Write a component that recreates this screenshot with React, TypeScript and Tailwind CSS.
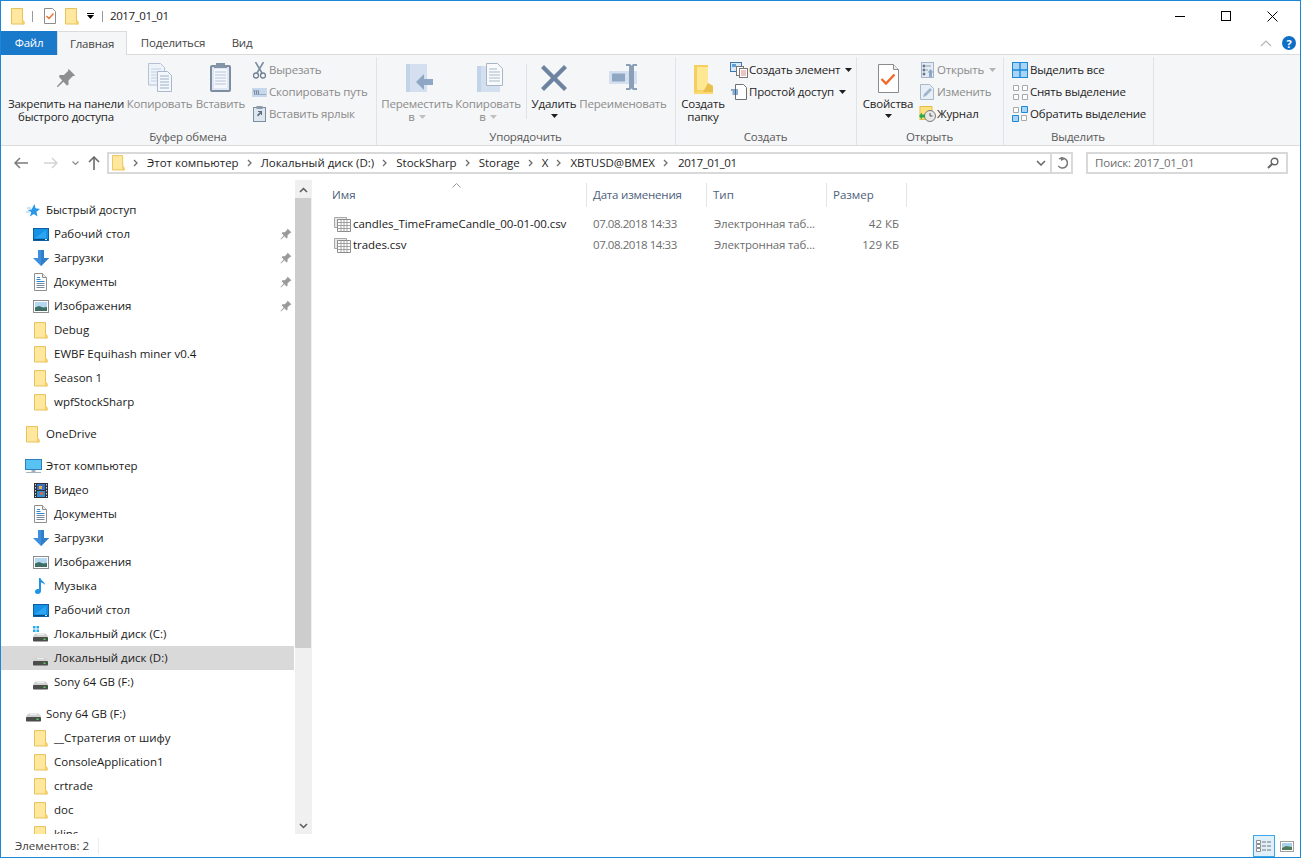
import React from "react";

const Folder = ({ w = 14, h = 17 }: { w?: number; h?: number }) => (
  <svg width={w} height={h} viewBox="0 0 14 17" className="shrink-0">
    <path d="M.5.5h11v13h1.500v2.500H.5z" fill="#ffe79e" stroke="#e8c35c" />
    <path d="M11 16.500v-4l1-1 1.500 2.500v2.500z" fill="#f3cf63" />
  </svg>
);

const Pin = ({ size = 12, color = "#9a9a9a" }: { size?: number; color?: string }) => (
  <svg width={size} height={size} viewBox="0 0 24 24" className="shrink-0">
    <path d="M15 1l8 8-3 1-5 5 0 5-2 1-4-4.500-7 6.500-1-1 6.500-7L3.500 10.500l1-2h5l5-5z" fill={color} />
  </svg>
);

const Doc = () => (
  <svg width="13" height="18" viewBox="0 0 13 18" className="shrink-0">
    <path d="M.5.500h8l4 4v13H.5z" fill="#fff" stroke="#8e8e8e" />
    <path d="M8.500.5v4h4" fill="#eee" stroke="#8e8e8e" />
    <path d="M3 4.500h3M2.500 6.500h4M2.500 8.500h8" stroke="#2f86cf" />
    <path d="M2.500 10.500h8M2.500 12.500h8M2.500 14.500h8" stroke="#7a8a9a" />
  </svg>
);

const Desktop = () => (
  <svg width="16" height="13" viewBox="0 0 16 13" className="shrink-0">
    <rect x=".5" y=".5" width="15" height="12" fill="#1592e6" stroke="#0f5f9e" />
    <path d="M2 10l11-8v8z" fill="#2ea5f2" />
    <path d="M1 11.500h14" stroke="#0b4a7d" />
    <path d="M12 11.500h2" stroke="#cfe8fa" />
  </svg>
);

const Down = () => (
  <svg width="16" height="16" viewBox="0 0 16 16" className="shrink-0">
    <path d="M5 0h6v8h5l-8 8-8-8h5z" fill="#3d8fdc" />
    <path d="M8 0h3v8h5l-8 8z" fill="#2f7fcc" />
  </svg>
);

const Pics = () => (
  <svg width="16" height="13" viewBox="0 0 16 13" className="shrink-0">
    <rect x=".5" y=".5" width="15" height="12" fill="#fff" stroke="#8c8c8c" />
    <rect x="2" y="2" width="12" height="9" fill="#b4d8f0" />
    <path d="M2 7.500l4-1.500 4 1.500 4-.5V11H2z" fill="#3f6f62" />
  </svg>
);

const Video = () => (
  <svg width="14" height="15" viewBox="0 0 14 15" className="shrink-0">
    <rect width="14" height="15" fill="#2f3136" />
    <rect x="3" y="1" width="8" height="6" fill="#3b6fc4" />
    <rect x="3" y="8" width="8" height="6" fill="#2c8fd8" />
    <rect x="5" y="3" width="3" height="3" fill="#e9b43c" />
    <rect x="6" y="9" width="3" height="3" fill="#d9663c" />
    <path d="M1.500 1v13M12.500 1v13" stroke="#d8d8d8" strokeDasharray="1.500 1.500" />
  </svg>
);

const Music = () => (
  <svg width="11" height="16" viewBox="0 0 11 16" className="shrink-0">
    <path d="M4 0h1.500c.3 2.500 4.500 3.500 4.500 7-1-1.500-2.500-2.500-4-2.500V13c0 2-1.500 3-3.300 3C1 16 0 15 0 13.700 0 12 1.500 11 3 11c.4 0 .8 0 1 .2z" fill="#1d94e6" />
  </svg>
);

const Drive = ({ win }: { win?: boolean }) => (
  <svg width="15" height="16" viewBox="0 0 15 16" className="shrink-0">
    {win && <path d="M0 0h2.500v2.500H0zM3.500 0H6v2.500H3.500zM0 3.500h2.500V6H0zM3.500 3.500H6V6H3.500z" fill="#27a9f0" />}
    <path d="M2.500 7.500h10Q15 9 15 11.500H0Q0 9 2.500 7.500z" fill="#d2d2d2" />
    <path d="M4 8.500h7" stroke="#efefef" />
    <rect x="0" y="11" width="15" height="4.500" rx=".8" fill="#4c4c4c" />
    <rect x="10.500" y="12.500" width="2" height="1.500" fill="#3fe04a" />
  </svg>
);

const Computer = () => (
  <svg width="17" height="15" viewBox="0 0 17 15" className="shrink-0">
    <rect x=".5" y=".5" width="16" height="10" fill="#59c2f5" stroke="#2f7fb8" />
    <path d="M6.500 11h4v2h-4z" fill="#9fb0bc" />
    <path d="M1 13.500h15" stroke="#a7b4be" />
  </svg>
);

const StarIcon = () => (
  <svg width="14" height="13" viewBox="0 0 14 13" className="shrink-0">
    <path d="M8.500 0l1 4.300L14 5l-3.500 2.800 1 4.700-3.700-2.500L4 12.500l1.200-4.500L1.500 6l4-.5z" fill="#2a97e8" />
    <path d="M1 4h4M0 8h3.500" stroke="#8bcaf5" />
  </svg>
);

const TableIcon = () => (
  <svg width="17" height="16" viewBox="0 0 17 16" className="shrink-0">
    <path d="M.5 1.500h12v2h-9v8h-3z" fill="#e8e8e8" stroke="#a8a8a8" />
    <path d="M3.500 3.500h13v12h-13z" fill="#fff" stroke="#8c8c8c" />
    <path d="M3.500 6.500h13M3.500 9.500h13M3.500 12.500h13M7 4v11M10 4v11M13 4v11" stroke="#9a9a9a" strokeWidth=".9" />
  </svg>
);

const ChevR = () => (
  <svg width="5" height="8" viewBox="0 0 5 8" className="shrink-0">
    <path d="M1 1l3 3-3 3" fill="none" stroke="#6d6d6d" strokeWidth="1.300" />
  </svg>
);

const Caret = ({ color = "#1e1e1e" }: { color?: string }) => (
  <svg width="7" height="4" viewBox="0 0 7 4" className="shrink-0">
    <path d="M0 0h7L3.500 4z" fill={color} />
  </svg>
);

const Scissors = () => (
  <svg width="13" height="17" viewBox="0 0 13 17" className="shrink-0">
    <path d="M2.500 0l6.500 11M10.500 0L4 11" stroke="#7c8ea3" strokeWidth="1.600" fill="none" />
    <circle cx="3" cy="13.500" r="2.500" fill="none" stroke="#6f7f92" strokeWidth="1.300" />
    <circle cx="10" cy="13.500" r="2.500" fill="none" stroke="#6f7f92" strokeWidth="1.300" />
  </svg>
);

const CopyPathIcon = () => (
  <svg width="15" height="9" viewBox="0 0 15 9" className="shrink-0">
    <rect width="15" height="9" fill="#c8d8ec" />
    <path d="M2 2l1 5M4 2l1 5M6 2l1 5M8.500 6.500h1M10.500 6.500h1M12.500 6.500h1" stroke="#6b7f96" />
  </svg>
);

const PasteLinkIcon = () => (
  <svg width="13" height="16" viewBox="0 0 13 16" className="shrink-0">
    <rect x=".5" y="1.500" width="12" height="14" fill="#dfe6f0" stroke="#7c8ea3" />
    <rect x="3.500" y="0" width="6" height="3" fill="#8c9aaa" />
    <path d="M4 9l3-3H5V5h4v4H8V7.500L5 10.500z" fill="#5f6f80" />
  </svg>
);

const LargePin = () => (
  <svg width="20" height="20" viewBox="0 0 24 24" className="mt-[5px] shrink-0">
    <path d="M15 1l8 8-3 1-5 5 0 5-2 1-4-4.500-7 6.500-1-1 6.500-7L3.500 10.500l1-2h5l5-5z" fill="#8d8f91" />
  </svg>
);

const LargeCopy = () => (
  <svg width="24" height="29" viewBox="0 0 24 29" className="shrink-0">
    <path d="M.5.500h12l4 4V22H.5z" fill="#eef3f9" stroke="#b4c2d4" />
    <path d="M3 6h10M3 9h10M3 12h10M3 15h10M3 18h10" stroke="#c3cfdf" />
    <path d="M9.500 8.500h10l4 4V28.500h-14z" fill="#f4f7fb" stroke="#a9b9cd" />
    <path d="M12 13h9M12 16h9M12 19h9M12 22h9M12 25h9" stroke="#9fb1c8" />
  </svg>
);

const LargePaste = () => (
  <svg width="21" height="29" viewBox="0 0 21 29" className="shrink-0">
    <rect x="1" y="3" width="19" height="25" rx="1" fill="#dfe7f2" stroke="#7d8ea3" strokeWidth="2" />
    <rect x="4" y="6" width="13" height="19" fill="#f4f7fb" />
    <path d="M5 9h11M5 12h11M5 15h11M5 18h11M5 21h11" stroke="#b6c5d8" />
    <path d="M6 0h9v2h2v3H4V2h2z" fill="#8493a5" />
  </svg>
);

const MoveIcon = () => (
  <svg width="27" height="29" viewBox="0 0 27 29" className="ml-[5px] mt-[1px] shrink-0">
    <rect x="0" y="0" width="21" height="28" fill="#d4e0f0" />
    <path d="M0 0h4v28H0z" fill="#c3d3e8" />
    <path d="M10 18L18 10v5h9v6h-9v5z" fill="#8ea7c4" />
  </svg>
);

const CopyToIcon = () => (
  <svg width="26" height="29" viewBox="0 0 26 29" className="ml-[4px] shrink-0">
    <rect x="0" y="3" width="23" height="26" fill="#d4e0f0" />
    <path d="M0 3h4v26H0z" fill="#c3d3e8" />
    <path d="M9.500.5h11l5 5v17h-16z" fill="#f8fafc" stroke="#a7b5c6" />
    <path d="M12 6h8M12 9h11M12 12h11M12 15h11M12 18h11" stroke="#a9b8ca" />
  </svg>
);

const DeleteIcon = () => (
  <svg width="26" height="26" viewBox="0 0 26 26" className="mt-[2px] shrink-0">
    <path d="M3 0l10 10L23 0l3 3-10 10 10 10-3 3-10-10L3 26l-3-3 10-10L0 3z" fill="#6e83a0" />
  </svg>
);

const RenameIcon = () => (
  <svg width="29" height="26" viewBox="0 0 29 26" className="mt-[1px] shrink-0">
    <rect x="0" y="7" width="28" height="13" fill="#d4e0f0" />
    <rect x="3" y="9.500" width="13" height="8" fill="#90a7c4" />
    <path d="M17 0h4l1.500 1.500L24 0h4v2h-3v22h3v2h-4l-1.500-1.500L21 26h-4v-2h3V2h-3z" fill="#8b9fb9" />
  </svg>
);

const NewFolderIcon = () => (
  <svg width="19" height="29" viewBox="0 0 19 29" className="mt-[2px] shrink-0">
    <path d="M0 0h14v18l5 3v8H0z" fill="#fbd870" />
    <path d="M0 0h14v25l-14 2z" fill="#f5d060" />
    <path d="M3 2h11v23H3z" fill="#ffe793" />
    <path d="M14 18l5 3v6H9z" fill="#e9c04e" />
  </svg>
);

const NewItemIcon = () => (
  <svg width="18" height="16" viewBox="0 0 18 16" className="shrink-0">
    <rect x=".5" y=".5" width="11" height="9" fill="#d9e8f6" stroke="#3a78b0" />
    <rect x="2" y="2" width="4" height="3" fill="#5f9ed0" />
    <rect x="6.500" y="4.500" width="7" height="9" fill="#fff" stroke="#777" />
    <rect x="9.500" y="6.500" width="8" height="9" fill="#fff" stroke="#777" />
    <path d="M11 9h5M11 11h5M11 13h5" stroke="#d98a86" />
  </svg>
);

const EasyAccessIcon = () => (
  <svg width="16" height="16" viewBox="0 0 16 16" className="shrink-0">
    <path d="M4.500.5h8l3 3v12h-11z" fill="#fff" stroke="#707070" />
    <path d="M0 6h7M1.500 8h5.500M1.500 10h5.500" stroke="#1f5f9e" />
  </svg>
);

const PropsIcon = () => (
  <svg width="21" height="29" viewBox="0 0 21 29" className="mt-[1px] shrink-0">
    <path d="M.5.500h15l5 5v23H.5z" fill="#fff" stroke="#8c8c8c" />
    <path d="M15.500.5v5h5" fill="#ececec" stroke="#8c8c8c" />
    <path d="M3.500 15l4.500 4.500 8.500-9" fill="none" stroke="#ef6a2a" strokeWidth="2.400" />
  </svg>
);

const OpenIcon = () => (
  <svg width="13" height="16" viewBox="0 0 13 16" className="shrink-0">
    <rect x=".5" y=".5" width="12" height="15" fill="#e4ebf4" stroke="#a5b5c8" />
    <path d="M2 3h2v2H2zM2 7h2v2H2zM2 11h2v2H2zM5 4h5M5 8h2" stroke="#8ea0b6" />
    <path d="M9.500 7l3 3.500H11V15H8v-4.500H6.500z" fill="#8ea7c4" />
  </svg>
);

const EditIcon = () => (
  <svg width="14" height="16" viewBox="0 0 14 16" className="shrink-0">
    <path d="M.5.5h9l4 4v11H.5z" fill="#e8eef6" stroke="#a9b9cc" />
    <path d="M3 13l1-3 6-6 2 2-6 6z" fill="#9fb4cd" />
  </svg>
);

const HistoryIcon = () => (
  <svg width="17" height="16" viewBox="0 0 17 16" className="shrink-0">
    <rect x="1" y=".5" width="12" height="13" fill="#ffe27f" stroke="#e3bd4b" />
    <circle cx="11" cy="10" r="5.500" fill="#e8e8e8" stroke="#7a7a7a" />
    <path d="M11 7v3h2.500" stroke="#555" fill="none" />
    <path d="M0 10l3-3.500v2h3v3H3v2z" fill="#2ea84a" />
  </svg>
);

const SelectAllIcon = () => (
  <svg width="16" height="16" viewBox="0 0 16 16" className="shrink-0">
    <rect x=".5" y=".5" width="15" height="15" fill="#a9d4f5" stroke="#1a8ad9" />
    <path d="M8 0v16M0 8h16" stroke="#1a8ad9" strokeWidth="1.400" />
  </svg>
);

const SelectNoneIcon = () => (
  <svg width="15" height="15" viewBox="0 0 15 15" className="shrink-0">
    <path d="M.5.5h5v5h-5zM9.500.5h5v5h-5zM.5 9.500h5v5h-5zM9.500 9.500h5v5h-5z" fill="#fff" stroke="#a8a8a8" />
  </svg>
);

const InvertIcon = () => (
  <svg width="16" height="16" viewBox="0 0 16 16" className="shrink-0">
    <path d="M9.500.5h6v6h-6zM.5 9.500h6v6h-6z" fill="#a9d4f5" stroke="#1a8ad9" />
    <path d="M1.500 1.500h5v5h-5zM9.500 9.500h5v5h-5z" fill="#fff" stroke="#a8a8a8" />
  </svg>
);

const SmallBtn = ({ icon, text, off, caret, w = 19 }: { icon: React.ReactNode; text: string; off?: boolean; caret?: boolean; w?: number }) => (
  <div className={`flex h-[22px] items-center whitespace-nowrap ${off ? "text-[#8b8b8b]" : "text-[#1e1e1e]"}`}>
    <div className="flex items-center justify-center" style={{ width: w }}>{icon}</div>
    <span>{text}</span>
    {caret && <span className="ml-[5px] flex"><Caret color={off ? "#b5b5b5" : "#1e1e1e"} /></span>}
  </div>
);

const LargeBtn = ({ icon, lines, off, w, caret }: { icon: React.ReactNode; lines: string[]; off?: boolean; w: number; caret?: "off" | "on" }) => (
  <div className={`flex flex-col items-center text-center leading-[13px] whitespace-nowrap ${off ? "text-[#8b8b8b]" : "text-[#1e1e1e]"}`} style={{ width: w }}>
    <div className="flex h-[40px] w-full justify-center pt-[6px]">{icon}</div>
    {lines.map((l) => (
      <div key={l} className="flex items-center gap-[4px]">
        {l}
        {caret === "off" && l === lines[lines.length - 1] && lines.length > 1 && <Caret color="#c0c0c0" />}
      </div>
    ))}
    {caret === "on" && <div className="mt-[4px] flex h-[9px] justify-center"><Caret /></div>}
  </div>
);

const Group = ({ w, label, children }: { w: number; label: string; children: React.ReactNode }) => (
  <div className="flex shrink-0 flex-col" style={{ width: w }}>
    <div className="flex h-[73px] border-r border-[#e1e3e6]">{children}</div>
    <div className="flex h-[16px] items-center justify-center border-r border-[#e1e3e6] pb-[1px] pr-[1px] text-[#5a5a5a]">{label}</div>
  </div>
);

const Row = ({ icon, text, pin, sel, indent = 31, iconW = 17 }: { icon: React.ReactNode; text: string; pin?: boolean; sel?: boolean; indent?: number; iconW?: number }) => (
  <div className={`flex h-6 shrink-0 items-center whitespace-nowrap text-[#1a1a1a] ${sel ? "mr-px bg-[#d9d9d9]" : ""}`}>
    <div className="flex shrink-0 items-center justify-center" style={{ marginLeft: indent, width: iconW }}>{icon}</div>
    <span className="ml-[5px] flex-1">{text}</span>
    {pin && <span className="mr-[3px] flex"><Pin /></span>}
  </div>
);

const Head = ({ icon, text }: { icon: React.ReactNode; text: string }) => (
  <Row icon={icon} text={text} indent={24} iconW={16} />
);

const crumbs = ["Этот компьютер", "Локальный диск (D:)", "StockSharp", "Storage", "X", "XBTUSD@BMEX", "2017_01_01"];

const files = [
  { n: "candles_TimeFrameCandle_00-01-00.csv", s: "42 КБ" },
  { n: "trades.csv", s: "129 КБ" },
];

export default function App() {
  return (
    <div
      className="flex h-[858px] w-[1301px] flex-col overflow-hidden border border-[#1a88d6] bg-white text-[11.5px] text-[#1a1a1a]"
      style={{ fontFamily: '"Open Sans","Noto Sans",sans-serif' }}
    >
      {/* title bar */}
      <div className="flex h-[30px] shrink-0 items-center pl-[10px]">
        <Folder />
        <div className="ml-[7px] h-[11px] w-px bg-[#9a9a9a]" />
        <div className="ml-[11px] flex"><svg width="12" height="16" viewBox="0 0 12 16"><path d="M.5.5h8l3 3v12H.5z" fill="#fff" stroke="#8c8c8c" /><path d="M2.500 8l2.500 2.500 4.500-5" fill="none" stroke="#ef6a2a" strokeWidth="1.300" /></svg></div>
        <div className="ml-[9px]"><Folder /></div>
        <div className="ml-[8px] flex w-[7px] flex-col items-center gap-[1px]">
          <div className="h-px w-[7px] bg-black" />
          <Caret color="#000" />
        </div>
        <div className="ml-[8px] h-[11px] w-px bg-[#9a9a9a]" />
        <span className="ml-[7px] tracking-[-0.4px] text-[#1a1a1a]">2017_01_01</span>
        <div className="flex-1" />
        <div className="flex h-full items-center">
          <div className="flex w-[46px] justify-center"><div className="h-px w-[10px] bg-black" /></div>
          <div className="flex w-[46px] justify-center"><div className="h-[10px] w-[10px] border border-black" /></div>
          <div className="flex w-[46px] justify-center">
            <svg width="11" height="11" viewBox="0 0 11 11"><path d="M.5.5l10 10M10.500.5l-10 10" stroke="#000" strokeWidth="1" /></svg>
          </div>
          <div className="w-[5px]" />
        </div>
      </div>

      {/* tabs */}
      <div className="relative z-10 -mb-px flex h-[24px] shrink-0 items-stretch tracking-[-0.2px]">
        <div className="flex w-[56px] items-center justify-center bg-[#1979ca] text-white">Файл</div>
        <div className="flex w-[70px] items-center justify-center border-x border-t border-[#dadbdc] bg-[#f5f6f7] text-[#444]">Главная</div>
        <div className="flex w-[92px] items-center justify-center text-[#444]">Поделиться</div>
        <div className="flex w-[46px] items-center justify-center text-[#444]">Вид</div>
        <div className="flex-1" />
        <div className="flex items-center">
          <svg width="12" height="7" viewBox="0 0 12 7"><path d="M1 6l5-5 5 5" fill="none" stroke="#b5b5b5" strokeWidth="1.200" /></svg>
          <div className="mx-[4px] ml-[10px] flex h-[14px] w-[14px] items-center justify-center rounded-full bg-[#0f6fc6] text-[11px] font-bold leading-none text-white">?</div>
        </div>
      </div>

      {/* ribbon */}
      <div className="flex h-[92px] shrink-0 border-y border-[#dadbdc] bg-[#f5f6f7] pt-[2px] tracking-[-0.2px]">
        <Group w={376} label="Буфер обмена">
          <div className="flex pl-[6px]">
            <LargeBtn w={118} icon={<LargePin />} lines={["Закрепить на панели", "быстрого доступа"]} />
            <LargeBtn w={69} off icon={<LargeCopy />} lines={["Копировать"]} />
            <LargeBtn w={53} off icon={<LargePaste />} lines={["Вставить"]} />
            <div className="ml-[3px] flex flex-col pt-[2px]">
              <SmallBtn off icon={<Scissors />} text="Вырезать" />
              <SmallBtn off icon={<CopyPathIcon />} text="Скопировать путь" />
              <SmallBtn off icon={<PasteLinkIcon />} text="Вставить ярлык" />
            </div>
          </div>
        </Group>
        <Group w={299} label="Упорядочить">
          <div className="flex pl-[5px]">
            <LargeBtn w={70} off caret="off" icon={<MoveIcon />} lines={["Переместить", "в"]} />
            <LargeBtn w={72} off caret="off" icon={<CopyToIcon />} lines={["Копировать", "в"]} />
            <div className="mx-[2px] mt-[7px] h-[55px] w-px bg-[#dfe1e4]" />
            <LargeBtn w={50} caret="on" icon={<DeleteIcon />} lines={["Удалить"]} />
            <LargeBtn w={88} off icon={<RenameIcon />} lines={["Переименовать"]} />
          </div>
        </Group>
        <Group w={181} label="Создать">
          <div className="flex pl-[5px]">
            <LargeBtn w={44} icon={<NewFolderIcon />} lines={["Создать", "папку"]} />
            <div className="ml-[4px] flex flex-col pt-[2px]">
              <SmallBtn w={20} icon={<NewItemIcon />} text="Создать элемент" caret />
              <SmallBtn w={20} icon={<EasyAccessIcon />} text="Простой доступ" caret />
            </div>
          </div>
        </Group>
        <Group w={147} label="Открыть">
          <div className="flex pl-[4px]">
            <LargeBtn w={54} caret="on" icon={<PropsIcon />} lines={["Свойства"]} />
            <div className="ml-[2px] flex flex-col pt-[2px]">
              <SmallBtn off w={20} icon={<OpenIcon />} text="Открыть" caret />
              <SmallBtn off w={20} icon={<EditIcon />} text="Изменить" />
              <SmallBtn w={20} icon={<HistoryIcon />} text="Журнал" />
            </div>
          </div>
        </Group>
        <Group w={150} label="Выделить">
          <div className="flex flex-col pl-[6px] pt-[2px]">
            <SmallBtn w={20} icon={<SelectAllIcon />} text="Выделить все" />
            <SmallBtn w={20} icon={<SelectNoneIcon />} text="Снять выделение" />
            <SmallBtn w={20} icon={<InvertIcon />} text="Обратить выделение" />
          </div>
        </Group>
      </div>

      {/* address row */}
      <div className="flex h-[34px] shrink-0 items-center">
        <div className="flex w-[106px] items-center pl-[13px]">
          <svg width="14" height="12" viewBox="0 0 14 12"><path d="M6 1L1 6l5 5M1 6h13" fill="none" stroke="#7a7a7a" strokeWidth="1.500" /></svg>
          <svg className="ml-[16px]" width="14" height="12" viewBox="0 0 14 12"><path d="M8 1l5 5-5 5M13 6H0" fill="none" stroke="#d4d4d4" strokeWidth="1.500" /></svg>
          <svg className="ml-[14px]" width="7" height="5" viewBox="0 0 7 5"><path d="M.5.500l3 3 3-3" fill="none" stroke="#8a8a8a" strokeWidth="1.200" /></svg>
          <svg className="ml-[9px]" width="12" height="14" viewBox="0 0 12 14"><path d="M1 6l5-5 5 5M6 1v13" fill="none" stroke="#6b6b6b" strokeWidth="1.600" /></svg>
        </div>
        <div className="flex h-[22px] w-[966px] items-center border-2 border-[#d9d9d9]">
          <div className="ml-[3px]"><Folder w={13} h={16} /></div>
          <div className="ml-[8px] flex items-center whitespace-nowrap text-[#1e1e1e]">
            <ChevR />
            {crumbs.map((c, i) => (
              <React.Fragment key={c}>
                <span className={`ml-[9px] ${c === "2017_01_01" ? "ml-[10px] tracking-[-0.4px]" : ""}`}>{c}</span>
                {i < crumbs.length - 1 && <span className="ml-[8px] flex"><ChevR /></span>}
              </React.Fragment>
            ))}
          </div>
          <div className="flex-1" />
          <div className="flex h-full w-[20px] items-center justify-center border-r-2 border-[#d9d9d9]">
            <svg width="10" height="6" viewBox="0 0 10 6"><path d="M1 1l4 4 4-4" fill="none" stroke="#666" strokeWidth="1.500" /></svg>
          </div>
          <div className="flex w-[19px] justify-center">
            <svg width="12" height="13" viewBox="0 0 12 13"><path d="M7 1.500A5 5 0 1 1 2 6" fill="none" stroke="#777" strokeWidth="1.500" transform="rotate(-40 6 7)" /><path d="M5 0l4 2-4 2z" fill="#777" /></svg>
          </div>
        </div>
        <div className="ml-[13px] flex h-[22px] w-[202px] items-center justify-between border-2 border-[#d9d9d9] pl-[7px] pr-[7px] text-[#6d6d6d]">
          <span className="tracking-[-0.2px]">Поиск: 2017_01_01</span>
          <svg width="12" height="12" viewBox="0 0 12 12"><circle cx="7.500" cy="4.500" r="3.300" fill="none" stroke="#666" strokeWidth="1.400" /><path d="M5 7l-4 4" stroke="#666" strokeWidth="2" /></svg>
        </div>
      </div>

      {/* body */}
      <div className="flex min-h-0 flex-1">
        {/* nav pane */}
        <div className="flex h-full w-[294px] shrink-0 flex-col overflow-hidden pt-[18px]">
          <Head icon={<StarIcon />} text="Быстрый доступ" />
          <Row pin icon={<Desktop />} text="Рабочий стол" />
          <Row pin icon={<Down />} text="Загрузки" />
          <Row pin icon={<Doc />} text="Документы" />
          <Row pin icon={<Pics />} text="Изображения" />
          <Row icon={<Folder />} text="Debug" />
          <Row icon={<Folder />} text="EWBF Equihash miner v0.4" />
          <Row icon={<Folder />} text="Season 1" />
          <Row icon={<Folder />} text="wpfStockSharp" />
          <div className="h-2 shrink-0" />
          <Head icon={<Folder />} text="OneDrive" />
          <div className="h-2 shrink-0" />
          <Head icon={<Computer />} text="Этот компьютер" />
          <Row icon={<Video />} text="Видео" />
          <Row icon={<Doc />} text="Документы" />
          <Row icon={<Down />} text="Загрузки" />
          <Row icon={<Pics />} text="Изображения" />
          <Row icon={<Music />} text="Музыка" />
          <Row icon={<Desktop />} text="Рабочий стол" />
          <Row icon={<Drive win />} text="Локальный диск (C:)" />
          <Row sel icon={<Drive />} text="Локальный диск (D:)" />
          <Row icon={<Drive />} text="Sony 64 GB (F:)" />
          <div className="h-2 shrink-0" />
          <Head icon={<Drive />} text="Sony 64 GB (F:)" />
          <Row icon={<Folder />} text="__Стратегия от шифу" />
          <Row icon={<Folder />} text="ConsoleApplication1" />
          <Row icon={<Folder />} text="crtrade" />
          <Row icon={<Folder />} text="doc" />
          <Row icon={<Folder />} text="klins" />
        </div>

        {/* scrollbar */}
        <div className="flex w-[16px] shrink-0 flex-col bg-[#f0f0f0] pt-[1px]">
          <div className="flex h-[17px] items-center justify-center">
            <svg width="9" height="6" viewBox="0 0 9 6"><path d="M1 5l3.500-3.500L8 5" fill="none" stroke="#5a5a5a" strokeWidth="1.500" /></svg>
          </div>
          <div className="h-[450px] bg-[#cdcdcd]" />
          <div className="flex-1" />
          <div className="flex h-[17px] items-center justify-center">
            <svg width="9" height="6" viewBox="0 0 9 6"><path d="M1 1l3.500 3.500L8 1" fill="none" stroke="#5a5a5a" strokeWidth="1.500" /></svg>
          </div>
        </div>

        {/* file list */}
        <div className="flex flex-1 flex-col border-l border-[#f0f0f0] pt-[3px]">
          <div className="flex h-[24px] shrink-0 pl-[16px] text-[#4c607a]">
            <div className="relative flex w-[259px] items-center border-r border-[#e5e5e5] pl-[4px]">
              Имя
              <svg className="absolute left-[124px] top-[0px]" width="9" height="5" viewBox="0 0 9 5"><path d="M.5 4.500l4-4 4 4" fill="none" stroke="#9a9a9a" /></svg>
            </div>
            <div className="flex w-[120px] items-center border-r border-[#e5e5e5] pl-[6px] tracking-[-0.2px]">Дата изменения</div>
            <div className="flex w-[120px] items-center border-r border-[#e5e5e5] pl-[6px]">Тип</div>
            <div className="flex w-[80px] items-center border-r border-[#e5e5e5] pl-[6px]">Размер</div>
          </div>
          <div className="pt-[6px]">
            {files.map((f) => (
              <div key={f.n} className="flex h-[21px] items-center whitespace-nowrap pl-[16px]">
                <div className="flex w-[259px] items-center pl-[6px] text-[#1a1a1a]">
                  <TableIcon />
                  <span className="ml-[2px] tracking-[-0.05px]">{f.n}</span>
                </div>
                <div className="w-[120px] pl-[6px] tracking-[-0.45px] text-[#6d6d6d]">07.08.2018 14:33</div>
                <div className="w-[120px] pl-[7px] tracking-[-0.15px] text-[#6d6d6d]">Электронная таб...</div>
                <div className="w-[72px] text-right text-[#6d6d6d]">{f.s}</div>
              </div>
            ))}
          </div>
        </div>
      </div>

      {/* status bar */}
      <div className="flex h-[23px] shrink-0 items-center bg-white pl-[14px] pt-[1px] text-[#404040]">
        <span>Элементов: 2</span>
        <div className="ml-[9px] h-[16px] w-px bg-[#ececec]" />
        <div className="flex-1" />
        <div className="mr-[6px] flex items-center gap-[5px]">
          <div className="flex h-[22px] w-[22px] items-center justify-center border border-[#3fa7e6] bg-[#dff0fb]">
            <svg width="16" height="12" viewBox="0 0 16 12">
              <path d="M.5.500h4v3h-4zM.5 4.500h4v3h-4zM.5 8.500h4v3h-4z" fill="#fff" stroke="#8c8c8c" />
              <path d="M6 2h4M11 2h4M6 6h4M11 6h4M6 10h4M11 10h4" stroke="#777" />
            </svg>
          </div>
          <svg width="14" height="11" viewBox="0 0 14 11">
            <rect x=".5" y=".5" width="13" height="10" fill="#fff" stroke="#a0a0a0" />
            <rect x="2" y="2" width="10" height="7" fill="#a9d0ec" />
            <path d="M2 7l4-2 6 1v3H2z" fill="#4f7a5c" />
          </svg>
        </div>
      </div>
    </div>
  );
}
